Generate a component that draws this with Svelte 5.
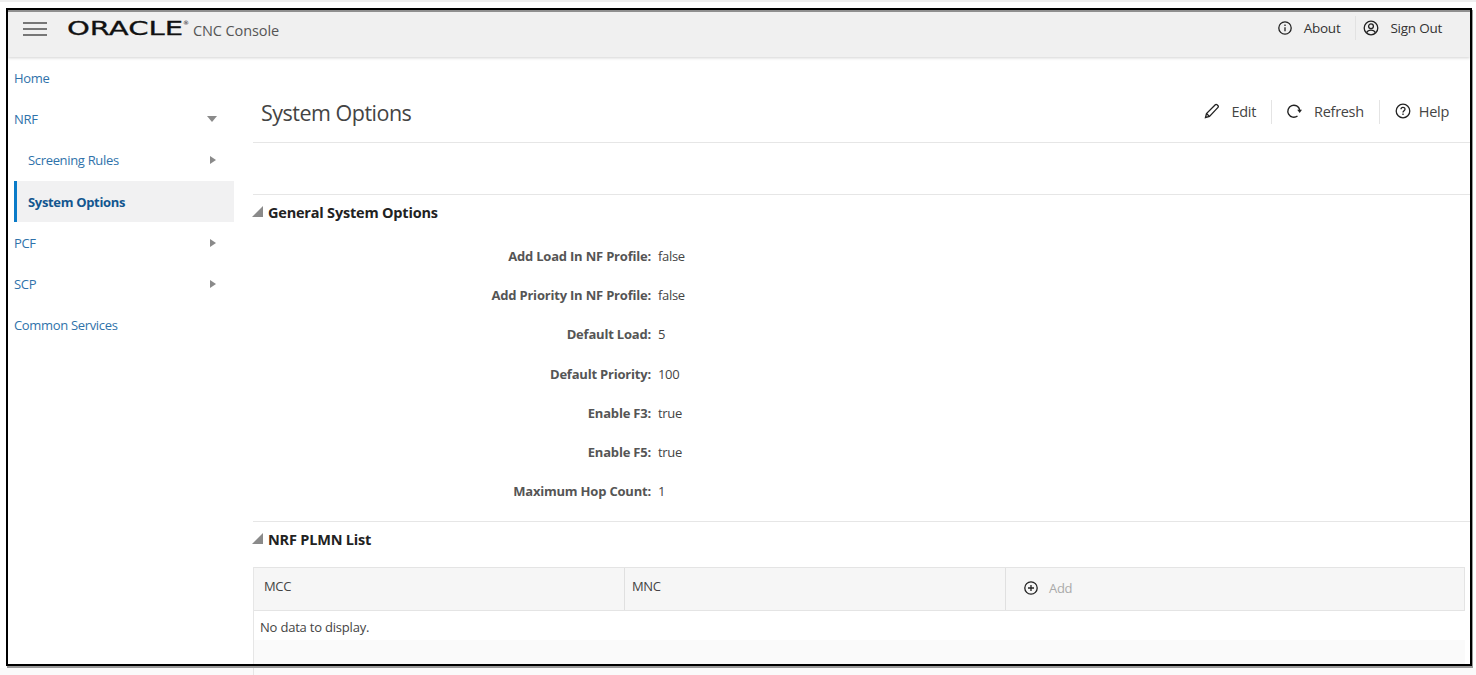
<script>
  const navItems = [
    { label: "Home" },
    { label: "NRF", arrow: "down" },
    { label: "Screening Rules", arrow: "right", child: true },
    { label: "System Options", child: true, active: true },
    { label: "PCF", arrow: "right" },
    { label: "SCP", arrow: "right" },
    { label: "Common Services" }
  ];

  const options = [
    ["Add Load In NF Profile:", "false"],
    ["Add Priority In NF Profile:", "false"],
    ["Default Load:", "5"],
    ["Default Priority:", "100"],
    ["Enable F3:", "true"],
    ["Enable F5:", "true"],
    ["Maximum Hop Count:", "1"]
  ];
</script>

<div class="page">
  <div class="frame">
    <header class="topbar">
      <button type="button" class="hamburger" aria-label="Menu"><span></span><span></span><span></span></button>
      <svg class="logo" width="120" height="20" viewBox="0 0 120 20" aria-label="Oracle">
        <text x="0" y="17" textLength="116" lengthAdjust="spacingAndGlyphs">ORACLE</text>
        <text class="reg" x="116" y="7">®</text>
      </svg>
      <span class="product">CNC Console</span>
      <div class="top-actions">
        <a class="top-link about" href="#about">
          <svg width="16" height="16" viewBox="0 0 16 16" fill="none" stroke="#222" stroke-width="1.3">
            <circle cx="8" cy="8" r="6.2" />
            <path d="M8 7.2v4M8 4.4v1.5" />
          </svg>
          <span>About</span>
        </a>
        <a class="top-link signout" href="#signout">
          <svg width="16" height="16" viewBox="0 0 16 16" fill="none" stroke="#222" stroke-width="1.3">
            <circle cx="8" cy="8" r="6.8" />
            <circle cx="8" cy="6.3" r="2.4" />
            <path d="M3.6 12.6c1-1.9 2.600-2.500 4.400-2.500s3.400.6 4.400 2.500" />
          </svg>
          <span>Sign Out</span>
        </a>
      </div>
    </header>

    <div class="body">
      <nav class="sidebar">
        {#each navItems as item}
          <a href="#nav" class="nav-item" class:child={item.child} class:active={item.active}>
            <span>{item.label}</span>
            {#if item.arrow}
              <i class="arrow {item.arrow}"></i>
            {/if}
          </a>
        {/each}
      </nav>

      <main class="content">
        <div class="title-row">
          <h1>System Options</h1>
          <div class="page-actions">
            <a class="page-link edit" href="#edit">
              <svg width="16" height="16" viewBox="0 0 16 16" fill="none" stroke="#222" stroke-width="1.300">
                <path d="M1.500 14.500l1-4L11.300 1.700a1.200 1.200 0 0 1 1.700 0l1 1a1.200 1.200 0 0 1 0 1.700L5.500 13.500z" />
                <path d="M2.500 10.500l3 3" />
              </svg>
              <span>Edit</span>
            </a>
            <a class="page-link refresh" href="#refresh">
              <svg width="16" height="16" viewBox="0 0 16 16" fill="none" stroke="#222" stroke-width="1.400">
                <path d="M11.500 13A6 6 0 1 1 13.700 7" />
                <path d="M11.200 6.800H16l-2.300 3.300z" fill="#222" stroke="none" />
              </svg>
              <span>Refresh</span>
            </a>
            <a class="page-link help" href="#help">
              <svg width="16" height="16" viewBox="0 0 16 16" fill="none" stroke="#222" stroke-width="1.300">
                <circle cx="8" cy="8" r="6.800" />
                <path d="M6 6.300c0-2.500 4-2.500 4-.1 0 1.600-2 1.500-2 3.300M8 10.500v1.500" />
              </svg>
              <span>Help</span>
            </a>
          </div>
        </div>

        <div class="spacer"></div>

        <section class="general">
          <h2><i class="corner"></i>General System Options</h2>
          <dl class="form">
            {#each options as [label, value]}
              <div class="form-row">
                <dt>{label}</dt>
                <dd>{value}</dd>
              </div>
            {/each}
          </dl>
        </section>

        <section class="plmn">
          <h2><i class="corner"></i>NRF PLMN List</h2>
          <div class="table">
            <div class="thead">
              <div class="th mcc">MCC</div>
              <div class="th mnc">MNC</div>
              <div class="th add">
                <svg width="16" height="16" viewBox="0 0 16 16" fill="none" stroke="#222" stroke-width="1.300">
                  <circle cx="8" cy="8" r="6.200" />
                  <path d="M8 5v6M5 8h6" />
                </svg>
                <span>Add</span>
              </div>
            </div>
            <div class="empty">No data to display.</div>
            <div class="table-fill"></div>
          </div>
        </section>
      </main>
    </div>
  </div>
  <div class="below"><div class="below-table"></div></div>
</div>

<style>
  :global(body) {
    margin: 0;
    background: #fff;
    overflow: hidden;
  }

  .page {
    width: 1476px;
    height: 675px;
    padding-top: 8px;
    box-sizing: border-box;
    font-family: "Open Sans", "Noto Sans", sans-serif;
    font-size: 13px;
    letter-spacing: -0.33px;
    color: #333;
    background: linear-gradient(#eeeeee 0, #eeeeee 2px, #fff 2px);
    overflow: hidden;
  }

  .frame {
    margin-left: 6px;
    width: 1466px;
    height: 658px;
    box-sizing: border-box;
    border: 2px solid #000;
    background: #fff;
    box-shadow: 1px 2px 0 #9a9a9a;
    overflow: hidden;
  }

  .topbar {
    display: flex;
    align-items: center;
    height: 47px;
    box-sizing: border-box;
    border-top: 2px solid #8f8f8f;
    background: #f0f0f0;
    box-shadow: 0 1px 3px rgba(0, 0, 0, 0.18);
    position: relative;
    padding: 0 0 11px 15px;
  }

  .hamburger {
    display: flex;
    flex-direction: column;
    gap: 4px;
    width: 24px;
    padding: 0;
    border: 0;
    background: transparent;
  }

  .hamburger span {
    height: 2px;
    background: #777;
  }

  .logo {
    margin-left: 20px;
    margin-top: -2px;
    overflow: visible;
  }

  .logo text {
    font-family: "DejaVu Sans", sans-serif;
    font-weight: 400;
    font-size: 19.500px;
    letter-spacing: 0;
    fill: #111;
    stroke: #111;
    stroke-width: 0.3px;
  }

  .logo .reg {
    font-size: 6px;
    stroke: none;
  }

  .product {
    margin: 2px 0 0 6px;
    font-size: 14.500px;
    letter-spacing: -0.1px;
    color: #555;
  }

  .top-actions {
    display: flex;
    align-items: center;
    margin: -3px 0 0 auto;
    padding-right: 28px;
  }

  .top-link,
  .page-link {
    display: flex;
    align-items: center;
    color: #333;
    text-decoration: none;
  }

  .top-link {
    height: 24px;
    font-size: 13.500px;
    letter-spacing: -0.25px;
  }

  .top-link.about {
    gap: 11px;
    padding-right: 15px;
    border-right: 1px solid #e2e2e2;
  }

  .top-link.signout {
    gap: 11px;
    padding-left: 7px;
  }

  .body {
    display: flex;
    height: 607px;
  }

  .sidebar {
    flex: 0 0 226px;
    display: flex;
    flex-direction: column;
  }

  .nav-item {
    display: flex;
    align-items: center;
    justify-content: space-between;
    height: 41.300px;
    flex: none;
    box-sizing: border-box;
    padding: 0 18px 0 6px;
    color: #2f72aa;
    text-decoration: none;
  }

  .nav-item.child {
    padding-left: 20px;
  }

  .nav-item.active {
    padding-left: 11px;
    border-left: 3px solid #0a7bc8;
    background: #f1f1f2;
    color: #13568f;
    font-weight: 700;
    margin-left: 6px;
  }

  .arrow {
    display: block;
    width: 0;
    height: 0;
  }

  .arrow.right {
    border-top: 4px solid transparent;
    border-bottom: 4px solid transparent;
    border-left: 6px solid #8a8a8a;
  }

  .arrow.down {
    border-left: 5px solid transparent;
    border-right: 5px solid transparent;
    border-top: 6px solid #8a8a8a;
    margin-right: -1px;
  }

  .content {
    flex: 1;
    min-width: 0;
    margin-left: 19px;
    color: #333;
  }

  .title-row {
    display: flex;
    align-items: center;
    justify-content: space-between;
    height: 86px;
    box-sizing: border-box;
    padding-top: 26px;
    padding-right: 21px;
    border-bottom: 1px solid #e6e6e6;
  }

  h1 {
    margin: 0 0 0 8px;
    font-size: 21.500px;
    font-weight: 400;
    letter-spacing: -0.5px;
    color: #444;
  }

  .page-actions {
    display: flex;
    align-items: center;
    margin-top: -2px;
  }

  .page-link {
    height: 24px;
    font-size: 14.500px;
    letter-spacing: -0.3px;
    color: #444;
  }

  .page-link svg {
    margin-top: -2px;
  }

  .page-link.edit {
    gap: 12px;
    padding-right: 15px;
    border-right: 1px solid #e4e4e4;
  }

  .page-link.refresh {
    gap: 12px;
    padding: 0 15px 0 14px;
    border-right: 1px solid #e4e4e4;
  }

  .page-link.help {
    gap: 8px;
    padding-left: 15px;
  }

  .spacer {
    height: 51px;
    border-bottom: 1px solid #e6e6e6;
  }

  h2 {
    display: flex;
    align-items: center;
    margin: 0;
    height: 35px;
    font-size: 14.500px;
    font-weight: 700;
    letter-spacing: -0.2px;
    color: #222;
  }

  .corner {
    width: 0;
    height: 0;
    margin: -3px 5px 0 -1px;
    border-left: 11px solid transparent;
    border-bottom: 11px solid #8a8a8a;
  }

  .general {
    height: 327px;
    box-sizing: border-box;
    border-bottom: 1px solid #e6e6e6;
  }

  .form {
    margin: 6px 0 0;
  }

  .form-row {
    display: flex;
    align-items: center;
    height: 39.300px;
  }

  dt {
    width: 398px;
    text-align: right;
    font-weight: 700;
    letter-spacing: -0.2px;
    color: #555;
  }

  dd {
    margin: 0 0 0 7px;
    color: #444;
  }

  .table {
    margin-top: 10px;
    width: 1211px;
    border-left: 1px solid #e6e6e6;
  }

  .thead {
    display: flex;
    height: 44px;
    box-sizing: border-box;
    background: #f6f6f6;
    border: 1px solid #e4e4e4;
    border-left: 0;
  }

  .th {
    display: flex;
    align-items: center;
    box-sizing: border-box;
    padding-left: 10px;
    padding-bottom: 6px;
    border-right: 1px solid #e0e0e0;
    color: #444;
  }

  .th.mcc {
    width: 371px;
  }

  .th.mnc {
    width: 381px;
    padding-left: 7px;
  }

  .th.add {
    flex: 1;
    gap: 10px;
    padding-left: 17px;
    padding-bottom: 2px;
    border-right: 0;
    color: #aaa;
  }

  .empty {
    display: flex;
    align-items: center;
    height: 29px;
    box-sizing: border-box;
    padding: 3px 0 0 6px;
    letter-spacing: -0.2px;
    color: #444;
  }

  .table-fill {
    height: 40px;
    background: #fafafa;
  }

  .below {
    height: 9px;
    margin-top: 2px;
    background: #fafafa;
    padding-left: 253px;
  }

  .below-table {
    height: 100%;
    border-left: 1px solid #e6e6e6;
  }
</style>
